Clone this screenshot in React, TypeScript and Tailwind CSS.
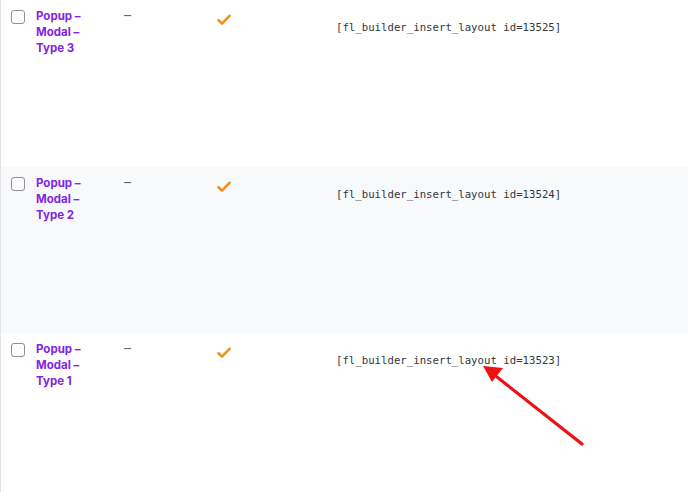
import React from "react";

const rows = [
  { type: "3", id: "13525", bg: "bg-white", h: "h-[167px]" },
  { type: "2", id: "13524", bg: "bg-[#f8f9fb]", h: "h-[166px]" },
  { type: "1", id: "13523", bg: "bg-white", h: "h-[159px]" },
];

function Check() {
  return (
    <svg width="14" height="12" viewBox="0 0 14 12">
      <path d="M1.5 6.2 L5 9.6 L12.5 1.8" fill="none" stroke="#f0911b" strokeWidth="2.6" strokeLinecap="round" strokeLinejoin="round" />
    </svg>
  );
}

export default function App() {
  return (
    <div className="relative w-[688px] h-[492px] overflow-hidden bg-white border-l border-[#e4e4e4]" style={{ fontFamily: "Inter, 'Noto Sans', sans-serif" }}>
      {rows.map((r) => (
        <div key={r.type} className={`flex ${r.bg} ${r.h}`}>
          <div className="w-[35px] pl-[10px] pt-[10px] shrink-0">
            <div className="w-[14px] h-[14px] rounded-[3px] border border-[#8c8f94] bg-white" />
          </div>
          <div className="w-[86px] shrink-0 pt-[8px] text-[11.5px] leading-[16px] font-bold text-[#8224e3]">
            <div>Popup –</div>
            <div>Modal –</div>
            <div>Type {r.type}</div>
          </div>
          <div className="w-[94px] shrink-0 pt-[7px] pl-[2px] text-[14px] leading-[16px] text-[#646970]">–</div>
          <div className="w-[120px] shrink-0 pt-[14px] pl-[1px]">
            <Check />
          </div>
          <div className="pt-[21px] text-[10.7px] leading-[14px] text-[#32373c]" style={{ fontFamily: "'DejaVu Sans Mono', monospace" }}>
            [fl_builder_insert_layout id={r.id}]
          </div>
        </div>
      ))}
      <svg className="absolute left-0 top-0" width="688" height="492" viewBox="0 0 688 492">
        <line x1="581" y1="444" x2="496" y2="377" stroke="#ee1111" strokeWidth="3.2" strokeLinecap="round" />
        <polygon points="482,366 502,368 491,382" fill="#ee1111" />
      </svg>
    </div>
  );
}
